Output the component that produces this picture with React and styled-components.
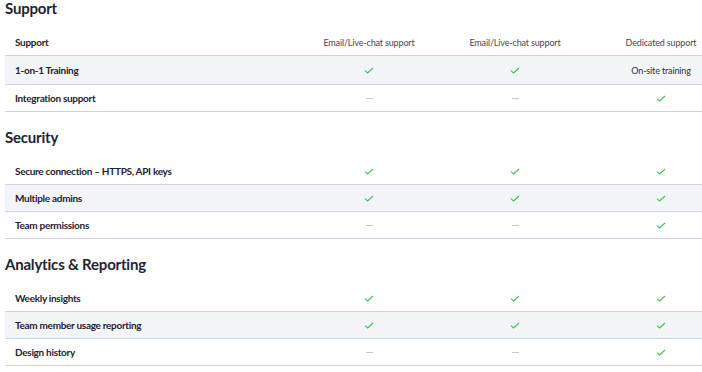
import React from 'react';
import styled, { createGlobalStyle } from 'styled-components';

const Global = createGlobalStyle`
  html, body {
    margin: 0;
    padding: 0;
    background: #fff;
    overflow: hidden;
  }
  body {
    font-family: Lato, "Liberation Sans", sans-serif;
    color: #1e2230;
  }
`;

const Page = styled.div`
  width: 702px;
  overflow: hidden;
  padding-left: 5px;
  box-sizing: border-box;
`;

const Section = styled.section`
  margin-top: ${p => (p.first ? '0' : '17px')};
`;

const Heading = styled.h2`
  margin: 0 0 13px;
  font-size: 15px;
  line-height: 16px;
  font-weight: 700;
  letter-spacing: -0.2px;
  color: #1f2433;
`;

const Table = styled.div`
  width: 729px;
`;

const Row = styled.div`
  display: grid;
  grid-template-columns: 291px 146px 146px 146px;
  align-items: center;
  height: ${p => (p.tall ? '29px' : '27px')};
  box-sizing: border-box;
  border-bottom: 1px solid #ccd3e6;
  background: ${p => (p.shaded ? '#f3f4f8' : '#fff')};
`;

const Label = styled.div`
  padding-left: 10px;
  font-size: 10px;
  font-weight: 700;
  letter-spacing: -0.3px;
  color: #1e2230;
`;

const Cell = styled.div`
  display: flex;
  justify-content: center;
  align-items: center;
  font-size: 9px;
  letter-spacing: -0.15px;
  color: ${p => (p.head ? '#424857' : '#2a2f3c')};
`;

const Check = () => (
  <svg width="10" height="7" viewBox="0 0 10 7">
    <polyline points="1,3.6 3.6,6 9,1" fill="none" stroke="#3cc05a" strokeWidth="1.1" />
  </svg>
);

const Dash = styled.span`
  display: block;
  width: 7px;
  height: 1px;
  background: #c4c6cc;
`;

const value = v => {
  if (v === true) return <Check />;
  if (v === false) return <Dash />;
  return v;
};

const sections = [
  {
    title: 'Support',
    head: ['Support', 'Email/Live-chat support', 'Email/Live-chat support', 'Dedicated support'],
    rows: [
      ['1-on-1 Training', true, true, 'On-site training'],
      ['Integration support', false, false, true],
    ],
  },
  {
    title: 'Security',
    rows: [
      ['Secure connection – HTTPS, API keys', true, true, true],
      ['Multiple admins', true, true, true],
      ['Team permissions', false, false, true],
    ],
  },
  {
    title: 'Analytics & Reporting',
    rows: [
      ['Weekly insights', true, true, true],
      ['Team member usage reporting', true, true, true],
      ['Design history', false, false, true],
    ],
  },
];

export default function App() {
  return (
    <Page>
      <Global />
      {sections.map((s, i) => (
        <Section key={s.title} first={i === 0}>
          <Heading>{s.title}</Heading>
          <Table>
            {s.head && (
              <Row>
                <Label>{s.head[0]}</Label>
                {s.head.slice(1).map((h, j) => (
                  <Cell head key={j}>{h}</Cell>
                ))}
              </Row>
            )}
            {s.rows.map((r, k) => {
              const shaded = s.head ? k % 2 === 0 : k % 2 === 1;
              const tall = r.some(v => typeof v === 'string' && v !== r[0]);
              return (
                <Row key={r[0]} shaded={shaded} tall={tall}>
                  <Label>{r[0]}</Label>
                  {r.slice(1).map((v, j) => (
                    <Cell key={j}>{value(v)}</Cell>
                  ))}
                </Row>
              );
            })}
          </Table>
        </Section>
      ))}
    </Page>
  );
}
